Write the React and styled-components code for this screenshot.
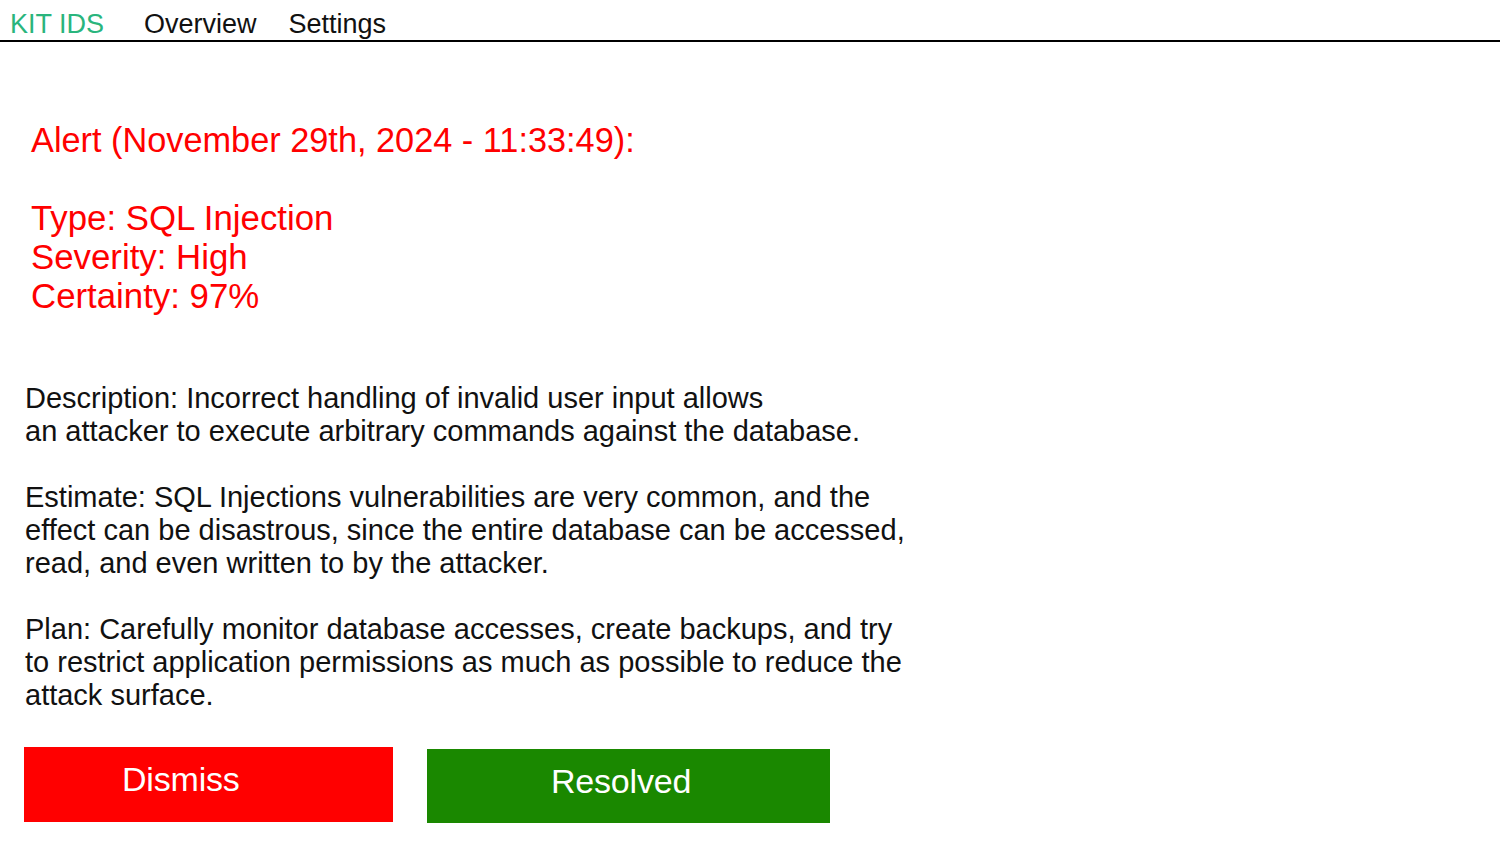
import styled, { createGlobalStyle } from 'styled-components';

const GlobalStyle = createGlobalStyle`
body {
  margin: 0;
  background: #fff;
  font-family: "Liberation Sans", Arial, sans-serif;
}
`;

const App = () => {
  return (
    <>
      <GlobalStyle />
      <Nav>
        <Brand>KIT IDS</Brand>
        <NavLink>Overview</NavLink>
        <NavLink>Settings</NavLink>
      </Nav>
      <Main>
        <Alert>
          <AlertTitle>Alert (November 29th, 2024 - 11:33:49):</AlertTitle>
          <AlertLine>Type: SQL Injection</AlertLine>
          <AlertLine>Severity: High</AlertLine>
          <AlertLine>Certainty: 97%</AlertLine>
        </Alert>
        <Details>
          <Paragraph>
            Description: Incorrect handling of invalid user input allows
            <br />
            an attacker to execute arbitrary commands against the database.
          </Paragraph>
          <Paragraph>
            Estimate: SQL Injections vulnerabilities are very common, and the
            <br />
            effect can be disastrous, since the entire database can be accessed,
            <br />
            read, and even written to by the attacker.
          </Paragraph>
          <Paragraph>
            Plan: Carefully monitor database accesses, create backups, and try
            <br />
            to restrict application permissions as much as possible to reduce the
            <br />
            attack surface.
          </Paragraph>
        </Details>
        <Actions>
          <ActionButton $bg="#ff0000" $w={369} $h={75} $pad={98}>
            Dismiss
          </ActionButton>
          <ActionButton $bg="#1a8800" $w={403} $h={74} $pad={124} $offset={2}>
            Resolved
          </ActionButton>
        </Actions>
      </Main>
    </>
  );
};

const Nav = styled.nav`
  display: flex;
  align-items: center;
  height: 40px;
  padding-left: 10px;
  border-bottom: 2px solid #000;
  font-size: 27px;
  line-height: 1;
`;

const Brand = styled.span`
  color: #2ab57d;
  margin-right: 40px;
  padding-top: 8px;
`;

const NavLink = styled.span`
  color: #111;
  margin-right: 32px;
  padding-top: 8px;
  cursor: pointer;
`;

const Main = styled.main`
  padding: 0 24px;
`;

const Alert = styled.section`
  color: #ff0000;
  padding: 79px 0 0 7px;
  font-size: 34.3px;
  line-height: 39px;
`;

const AlertTitle = styled.div`
  margin-bottom: 38px;
`;

const AlertLine = styled.div`
  font-size: 34.8px;
`;

const Details = styled.section`
  margin-top: 67px;
  color: #111;
  font-size: 29px;
  line-height: 33px;
`;

const Paragraph = styled.p`
  margin: 0 0 33px;
  padding-left: 1px;
`;

const Actions = styled.div`
  display: flex;
  align-items: flex-start;
  gap: 34px;
  margin-top: 35px;
`;

const ActionButton = styled.button`
  width: ${(p) => p.$w}px;
  height: ${(p) => p.$h}px;
  margin-top: ${(p) => p.$offset || 0}px;
  padding: 0 0 10px ${(p) => p.$pad}px;
  border: none;
  background: ${(p) => p.$bg};
  color: #fff;
  font-family: "Liberation Sans", Arial, sans-serif;
  font-size: 34px;
  letter-spacing: -0.2px;
  text-align: left;
  cursor: pointer;
`;

export default App;
